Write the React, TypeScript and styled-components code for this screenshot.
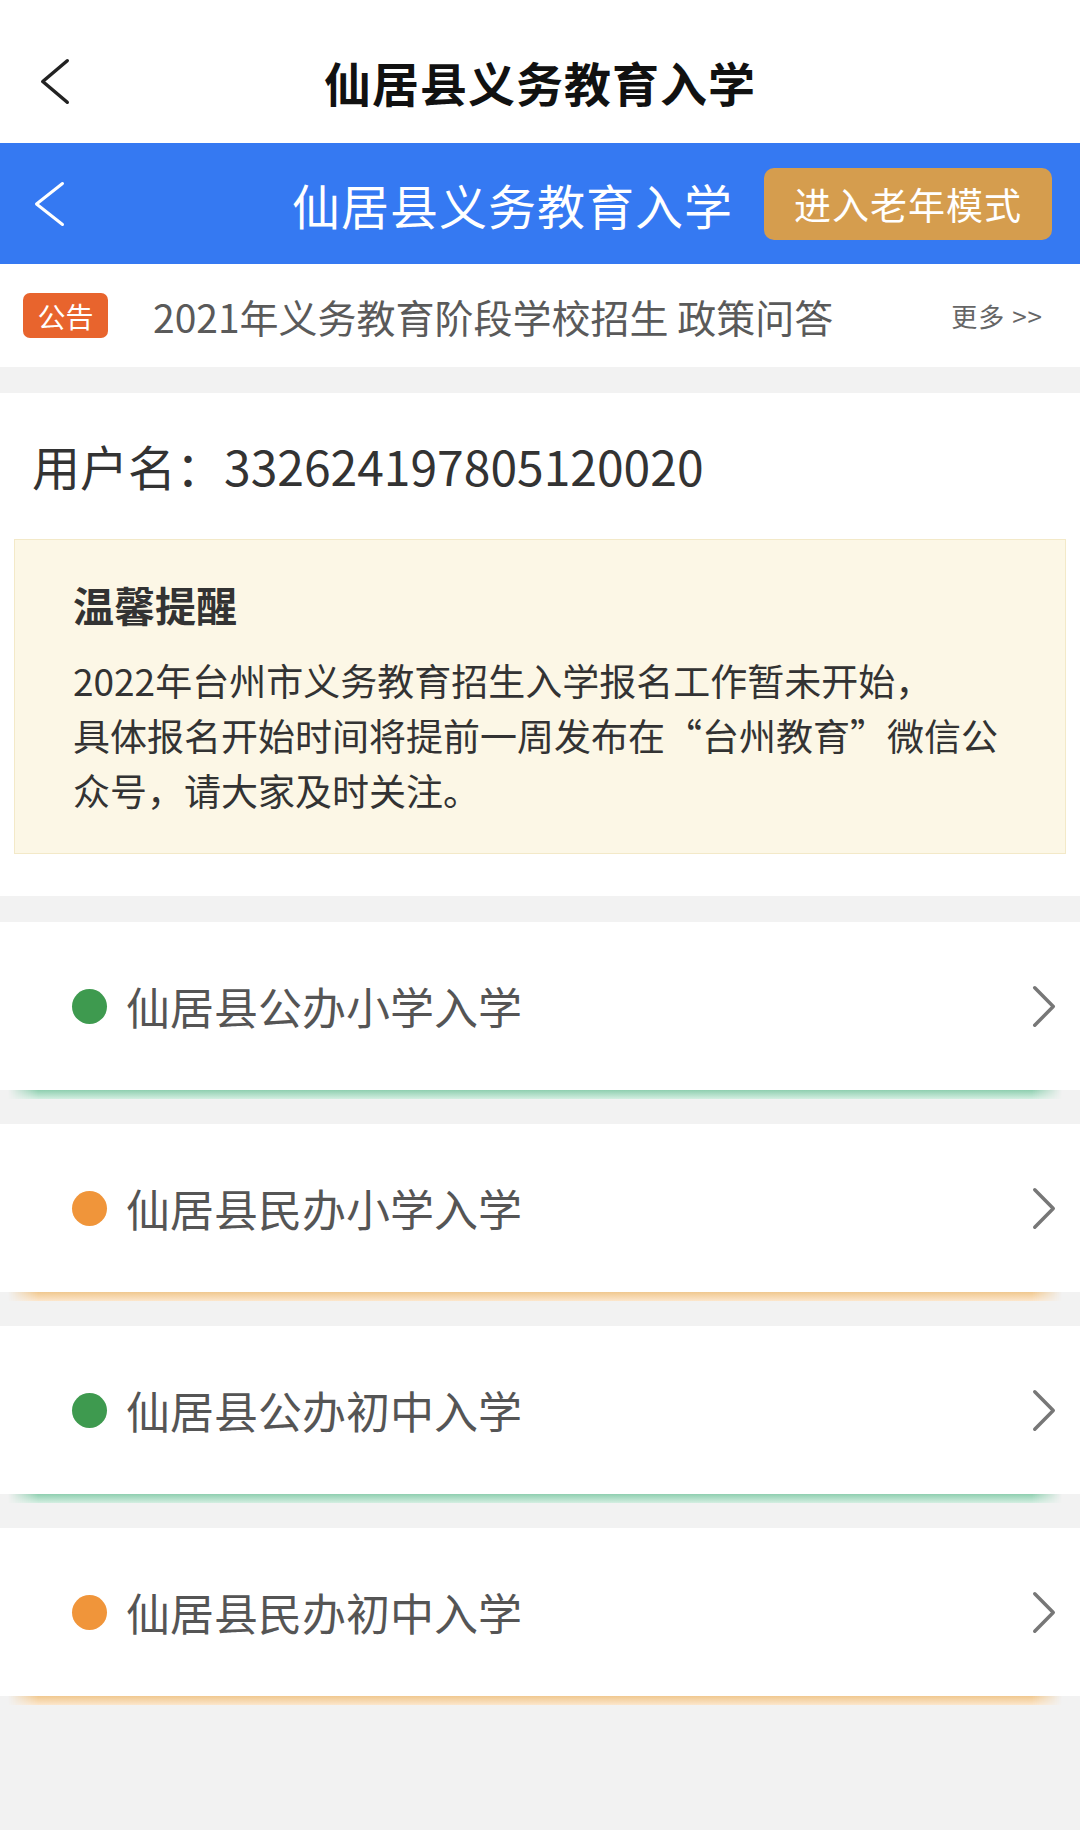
import styled, { createGlobalStyle } from 'styled-components';

const GlobalStyle = createGlobalStyle`
  html, body {
    margin: 0;
    padding: 0;
    background: #f2f2f2;
  }
  body {
    font-family: "Noto Sans CJK SC", "Noto Sans", sans-serif;
  }
`

const Page = styled.div`
  width: 1080px;
  min-height: 1830px;
  background: #f2f2f2;
`

const TopNav = styled.div`
  display: grid;
  grid-template-columns: 1fr auto 1fr;
  align-items: center;
  height: 143px;
  box-sizing: border-box;
  padding: 20px 40px 0 40px;
  background: #fff;
`

const TopTitle = styled.h1`
  margin: 0;
  font-size: 47px;
  font-weight: 700;
  color: #111;
  letter-spacing: 1px;
`

const BlueBar = styled.div`
  display: flex;
  align-items: center;
  height: 121px;
  padding: 0 28px 0 34px;
  background: #3579f2;
`

const BlueTitle = styled.div`
  margin-left: auto;
  margin-right: 31px;
  font-size: 48px;
  font-weight: 400;
  color: #fff;
  letter-spacing: 1px;
`

const ElderButton = styled.button`
  width: 288px;
  height: 72px;
  border: none;
  border-radius: 10px;
  background: #d59d4e;
  color: #fff;
  font-family: inherit;
  font-size: 37px;
  letter-spacing: 1px;
  padding: 0;
`

const NoticeRow = styled.div`
  display: flex;
  align-items: center;
  height: 103px;
  padding: 0 37px 0 23px;
  background: #fff;
`

const NoticeBadge = styled.span`
  display: flex;
  align-items: center;
  justify-content: center;
  width: 85px;
  height: 45px;
  border-radius: 7px;
  background: #e8642d;
  color: #fff;
  font-size: 28px;
`

const NoticeText = styled.span`
  margin-left: 45px;
  font-size: 39px;
  color: #5a5a5a;
`

const MoreLink = styled.span`
  margin-left: auto;
  font-size: 26px;
  color: #666;
  letter-spacing: 1px;
`

const UserSection = styled.div`
  margin-top: 26px;
  padding: 44px 14px 42px;
  background: #fff;
`

const UserName = styled.div`
  padding-left: 18px;
  font-size: 48px;
  line-height: 56px;
  color: #333;
`

const TipBox = styled.div`
  margin-top: 46px;
  padding: 36px 20px 35px 58px;
  background: #fcf7e6;
  border: 1px solid #f3e9c8;
`

const TipTitle = styled.div`
  font-size: 41px;
  font-weight: 700;
  color: #333;
  line-height: 56px;
  margin-bottom: 21px;
`

const TipBody = styled.p`
  margin: 0;
  font-size: 37px;
  line-height: 55px;
  color: #333;
`

const EntryList = styled.div`
  display: flex;
  flex-direction: column;
  gap: 34px;
  padding-top: 26px;
`

const EntryCard = styled.div<{ $line: string; $lineLight: string }>`
  position: relative;
  display: flex;
  align-items: center;
  height: 168px;
  padding: 0 24px 0 72px;
  background: #fff;

  &::after {
    content: '';
    position: absolute;
    top: 100%;
    left: 8px;
    right: 18px;
    height: 9px;
    background: linear-gradient(to bottom, ${p => p.$line}, ${p => p.$lineLight});
    -webkit-mask-image: linear-gradient(to right, transparent, #000 30px, #000 calc(100% - 30px), transparent);
    mask-image: linear-gradient(to right, transparent, #000 30px, #000 calc(100% - 30px), transparent);
  }
`

const Dot = styled.span<{ $color: string }>`
  width: 35px;
  height: 35px;
  border-radius: 50%;
  background: ${p => p.$color};
  flex-shrink: 0;
`

const EntryLabel = styled.span`
  margin-left: 19px;
  font-size: 44px;
  color: #555;
`

const EntryArrow = styled.span`
  margin-left: auto;
  display: flex;
`

function Chevron({ dir, w, h, color, stroke }: { dir: 'left' | 'right'; w: number; h: number; color: string; stroke: number }) {
  const s = stroke / 2 + 1;
  const pts = dir === 'left'
    ? `${w - s},${s} ${s},${h / 2} ${w - s},${h - s}`
    : `${s},${s} ${w - s},${h / 2} ${s},${h - s}`;
  return (
    <svg width={w} height={h} viewBox={`0 0 ${w} ${h}`}>
      <polyline points={pts} fill="none" stroke={color} strokeWidth={stroke} strokeLinecap="round" strokeLinejoin="round" />
    </svg>
  )
}

const entries = [
  { label: '仙居县公办小学入学', dot: '#3e9a4f', line: '#8fcfb0', light: '#d3eee1' },
  { label: '仙居县民办小学入学', dot: '#f0953a', line: '#f0c88f', light: '#fce6cc' },
  { label: '仙居县公办初中入学', dot: '#3e9a4f', line: '#8fcfb0', light: '#d3eee1' },
  { label: '仙居县民办初中入学', dot: '#f0953a', line: '#f0c88f', light: '#fce6cc' },
]

export default function App() {
  return (
    <Page>
      <GlobalStyle />
      <TopNav>
        <Chevron dir="left" w={30} h={47} color="#222" stroke={3.5} />
        <TopTitle>仙居县义务教育入学</TopTitle>
        <div />
      </TopNav>

      <BlueBar>
        <Chevron dir="left" w={31} h={46} color="#fff" stroke={3} />
        <BlueTitle>仙居县义务教育入学</BlueTitle>
        <ElderButton>进入老年模式</ElderButton>
      </BlueBar>

      <NoticeRow>
        <NoticeBadge>公告</NoticeBadge>
        <NoticeText>2021年义务教育阶段学校招生 政策问答</NoticeText>
        <MoreLink>更多 &gt;&gt;</MoreLink>
      </NoticeRow>

      <UserSection>
        <UserName>用户名：332624197805120020</UserName>
        <TipBox>
          <TipTitle>温馨提醒</TipTitle>
          <TipBody>
            2022年台州市义务教育招生入学报名工作暂未开始，<br />
            具体报名开始时间将提前一周发布在“台州教育”微信公<br />
            众号，请大家及时关注。
          </TipBody>
        </TipBox>
      </UserSection>

      <EntryList>
        {entries.map(e => (
          <EntryCard key={e.label} $line={e.line} $lineLight={e.light}>
            <Dot $color={e.dot} />
            <EntryLabel>{e.label}</EntryLabel>
            <EntryArrow>
              <Chevron dir="right" w={24} h={43} color="#777" stroke={3.5} />
            </EntryArrow>
          </EntryCard>
        ))}
      </EntryList>
    </Page>
  )
}
